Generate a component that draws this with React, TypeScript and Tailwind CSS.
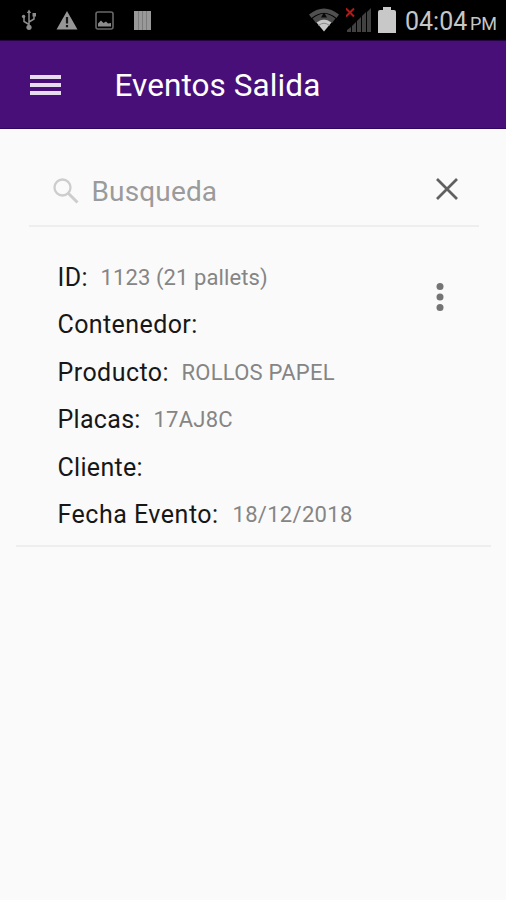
const details = [
  { label: 'ID:', value: '1123 (21 pallets)', labelClass: 'w-[30px] tracking-[0.4px]', valueClass: 'tracking-[0.1px]' },
  { label: 'Contenedor:', value: '', labelClass: 'tracking-[0.4px]', valueClass: '' },
  { label: 'Producto:', value: 'ROLLOS PAPEL', labelClass: 'w-[111px] tracking-[0.45px]', valueClass: 'tracking-[0.25px]' },
  { label: 'Placas:', value: '17AJ8C', labelClass: 'w-[83px] tracking-[0.3px]', valueClass: 'tracking-[0.25px]' },
  { label: 'Cliente:', value: '', labelClass: 'tracking-[0.3px]', valueClass: '' },
  { label: 'Fecha Evento:', value: '18/12/2018', labelClass: 'w-[162px] tracking-[0.5px]', valueClass: 'tracking-[0.3px]' },
];

function UsbIcon() {
  return (
    <svg className="h-[22px] w-4" viewBox="0 0 16 22" fill="none" stroke="#8c8c8c" strokeWidth="1.5">
      <path d="M8 3v15M8 15.5L3 12.500V8M8 13l5-3V6" />
      <path d="M8 .5l2.200 3.500H5.800z" fill="#8c8c8c" stroke="none" />
      <circle cx="8" cy="18.300" r="2.600" fill="#8c8c8c" stroke="none" />
      <circle cx="2.600" cy="7.500" r="1.700" fill="#8c8c8c" stroke="none" />
      <path d="M11.500 4h3.500v3.500h-3.500z" fill="#8c8c8c" stroke="none" />
    </svg>
  );
}

function WarningIcon() {
  return (
    <svg className="h-5 w-[22px]" viewBox="0 0 22 20">
      <path d="M11 1L21.500 19.500H.5z" fill="#969696" />
      <path d="M9.900 7h2.200v6.500H9.900zM9.900 15h2.200v2.200H9.900z" fill="#161616" />
    </svg>
  );
}

function PictureIcon() {
  return (
    <svg className="h-[19px] w-[19px]" viewBox="0 0 19 19">
      <rect x="1" y="1" width="17" height="17" rx="2" fill="none" stroke="#686868" strokeWidth="1.600" />
      <path d="M3 15.500v-3l3-3 2.500 2.500L11 10.500l2 2 3-.5v3.500z" fill="#8c8c8c" />
    </svg>
  );
}

function BarsIcon() {
  return (
    <svg className="h-[19px] w-[17px]" viewBox="0 0 17 19">
      <path d="M0 0h17v19H0z" fill="#999" />
      <path d="M4.500 0v19M8.500 0v19M12.500 0v19" stroke="#7c7c7c" strokeWidth="1" />
    </svg>
  );
}

function WifiIcon() {
  return (
    <svg className="h-6 w-[30px]" viewBox="0 0 30 24">
      <path d="M0 6.500Q15-5.500 30 6.500L27.500 10Q15 0 2.500 10z" fill="#505050" />
      <path d="M3.500 10.500Q15 1 26.500 10.500L23 15Q15 8 7 15z" fill="#4a4a4a" />
      <path d="M15 4.500l3 5h-6z" fill="#080808" />
      <path d="M7.500 14.500Q15 8.500 22.500 14.500L15 23.500z" fill="#c8c8c8" />
      <path d="M9.500 17.500Q15 13 20.500 17.500" fill="none" stroke="#888" strokeWidth="1" />
    </svg>
  );
}

function SignalIcon() {
  return (
    <svg className="h-6 w-[27px]" viewBox="0 0 27 24">
      <path d="M1 24v-2l4-3v5zM6 24v-6l4-4v10zM11 24V13l4-4v15zM16 24V8l4-4v20zM21 24V4l4-4v24z" fill="#414141" />
      <path d="M0 .5l8 8M8 .5l-8 8" stroke="#b51a1a" strokeWidth="2" />
    </svg>
  );
}

function StatusBar() {
  return (
    <div className="flex h-10 bg-black">
      <div className="flex items-center pl-[21px]">
        <UsbIcon />
        <div className="ml-[19px]"><WarningIcon /></div>
        <div className="ml-[17px]"><PictureIcon /></div>
        <div className="ml-5"><BarsIcon /></div>
      </div>
      <div className="ml-auto flex items-center pr-[10px] text-[#c6c6c6]">
        <WifiIcon />
        <div className="ml-[7px]"><SignalIcon /></div>
        <svg className="mb-px ml-[5px] h-[26px] w-[18px]" viewBox="0 0 18 26">
          <path d="M5 0h8v3h3q2 0 2 2v21H0V5q0-2 2-2h3z" fill="#c8c8c8" />
        </svg>
        <span className="ml-[9px] w-[65px] pt-[3px] text-[25px] leading-9 whitespace-nowrap">04:04</span>
        <span className="w-[26px] pt-[7px] text-[18px] whitespace-nowrap">PM</span>
      </div>
    </div>
  );
}

export default function App() {
  return (
    <main className="flex h-[900px] w-[506px] flex-col overflow-hidden bg-[#fafafa] font-['Roboto',sans-serif]">
      <StatusBar />
      <header className="flex h-[89px] items-center border-t border-b border-t-[#240542] border-b-[#300662] bg-[#470f77] pl-[29.500px] text-white">
        <button aria-label="Menu" className="flex w-[31px] flex-col gap-[4px]">
          <span className="h-[4px] bg-[#e6dced]" />
          <span className="h-[4px] bg-[#e6dced]" />
          <span className="h-[4px] bg-[#e6dced]" />
        </button>
        <h1 className="ml-[54px] pt-[3px] text-[31.500px] leading-10 tracking-[0.08px] whitespace-nowrap">Eventos Salida</h1>
      </header>
      <section className="mx-[29px] mr-[27px] flex h-[98px] shrink-0 items-center border-b-2 border-[#eeeeee] pt-[27px] pr-[21px] pl-6">
        <svg className="h-[26px] w-[26px]" viewBox="0 0 26 26" fill="none" stroke="#cdcdcd">
          <circle cx="9.500" cy="9.500" r="8" strokeWidth="2.300" />
          <path d="M15.500 15.500l9 9" strokeWidth="3" />
        </svg>
        <span className="ml-[12.500px] pt-[2px] text-[28px] leading-9 tracking-[0.15px] text-[#9b9b9b]">Busqueda</span>
        <svg className="mb-[3px] ml-auto h-[22px] w-[22px]" viewBox="0 0 22 22" stroke="#606060" strokeWidth="2.700">
          <path d="M1 1l20 20M21 1L1 21" />
        </svg>
      </section>
      <article className="mr-[15px] ml-4 flex h-[320px] shrink-0 justify-between border-b-2 border-[#eeeeee] pt-[27px] pr-[47px] pl-[41.500px]">
        <dl>
          {details.map(({ label, value, labelClass, valueClass }) => (
            <div key={label} className="flex h-[47.400px] items-center whitespace-nowrap">
              <dt className={`text-[25px] text-[#171717] ${labelClass}`}>{label}</dt>
              <dd className={`ml-[13px] text-[22px] text-[#858585] ${valueClass}`}>{value}</dd>
            </div>
          ))}
        </dl>
        <svg className="mt-[27.500px] h-[30px] w-2" viewBox="0 0 8 30" fill="#747474">
          <circle cx="4" cy="4.500" r="3.500" />
          <circle cx="4" cy="15" r="3.500" />
          <circle cx="4" cy="25.500" r="3.500" />
        </svg>
      </article>
    </main>
  );
}
